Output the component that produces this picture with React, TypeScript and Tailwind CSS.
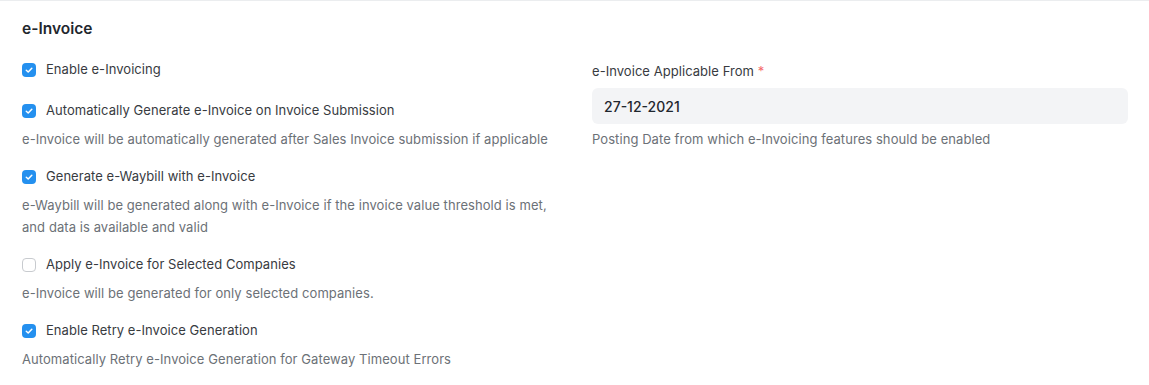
import React from "react";

function Check({ checked }: { checked: boolean }) {
  return checked ? (
    <span className="flex h-[14px] w-[14px] shrink-0 items-center justify-center rounded-[4px] bg-[#2490ef]">
      <svg width="10" height="10" viewBox="0 0 10 10" fill="none">
        <path d="M2.3 5.2 L4.2 7 L7.8 3.2" stroke="white" strokeWidth="1.5" strokeLinecap="round" strokeLinejoin="round" />
      </svg>
    </span>
  ) : (
    <span className="h-[14px] w-[14px] shrink-0 rounded-[4px] border border-[#c8cbcf] bg-white" />
  );
}

function CheckField({
  label,
  checked,
  desc,
  mb,
}: {
  label: string;
  checked: boolean;
  desc?: string[];
  mb: string;
}) {
  return (
    <div className={mb}>
      <div className="flex h-[20px] items-center gap-[10px]">
        <Check checked={checked} />
        <span className="text-[13px] tracking-[0.05px] text-[#383b3f]">{label}</span>
      </div>
      {desc && (
        <div className="mt-[7px] text-[13px] leading-[22px] tracking-[0.07px] text-[#6c7177]">
          {desc.map((d, i) => (
            <div key={i}>{d}</div>
          ))}
        </div>
      )}
    </div>
  );
}

export default function App() {
  return (
    <div
      className="h-[385px] w-[1149px] border-t border-[#ebedef] bg-white"
      style={{ fontFamily: "Inter, 'Noto Sans', sans-serif" }}
    >
      <div className="pl-[22px] pr-[21px] pt-[18px]">
        <h2 className="h-[20px] text-[15.5px] font-semibold leading-[20px] text-[#1f272e]">e-Invoice</h2>
        <div className="mt-[21px] grid grid-cols-[537px_1fr] gap-x-[33px]">
          <div>
            <CheckField label="Enable e-Invoicing" checked mb="mb-[21px]" />
            <CheckField
              label="Automatically Generate e-Invoice on Invoice Submission"
              checked
              desc={["e-Invoice will be automatically generated after Sales Invoice submission if applicable"]}
              mb="mb-[17px]"
            />
            <CheckField
              label="Generate e-Waybill with e-Invoice"
              checked
              desc={[
                "e-Waybill will be generated along with e-Invoice if the invoice value threshold is met,",
                "and data is available and valid",
              ]}
              mb="mb-[17px]"
            />
            <CheckField
              label="Apply e-Invoice for Selected Companies"
              checked={false}
              desc={["e-Invoice will be generated for only selected companies."]}
              mb="mb-[17px]"
            />
            <CheckField
              label="Enable Retry e-Invoice Generation"
              checked
              desc={["Automatically Retry e-Invoice Generation for Gateway Timeout Errors"]}
              mb="mb-0"
            />
          </div>
          <div className="pt-[1px]">
            <div className="h-[20px] text-[13px] leading-[20px] tracking-[0.05px] text-[#383b3f]">
              e-Invoice Applicable From <span className="text-[#f56b6b]">*</span>
            </div>
            <div className="mt-[7px] flex h-[36px] items-center rounded-[6px] bg-[#f3f4f6] px-[12px] text-[14px] font-medium text-[#1f272e]">
              27-12-2021
            </div>
            <div className="mt-[4px] text-[13px] leading-[22px] tracking-[0.07px] text-[#6c7177]">
              Posting Date from which e-Invoicing features should be enabled
            </div>
          </div>
        </div>
      </div>
    </div>
  );
}
